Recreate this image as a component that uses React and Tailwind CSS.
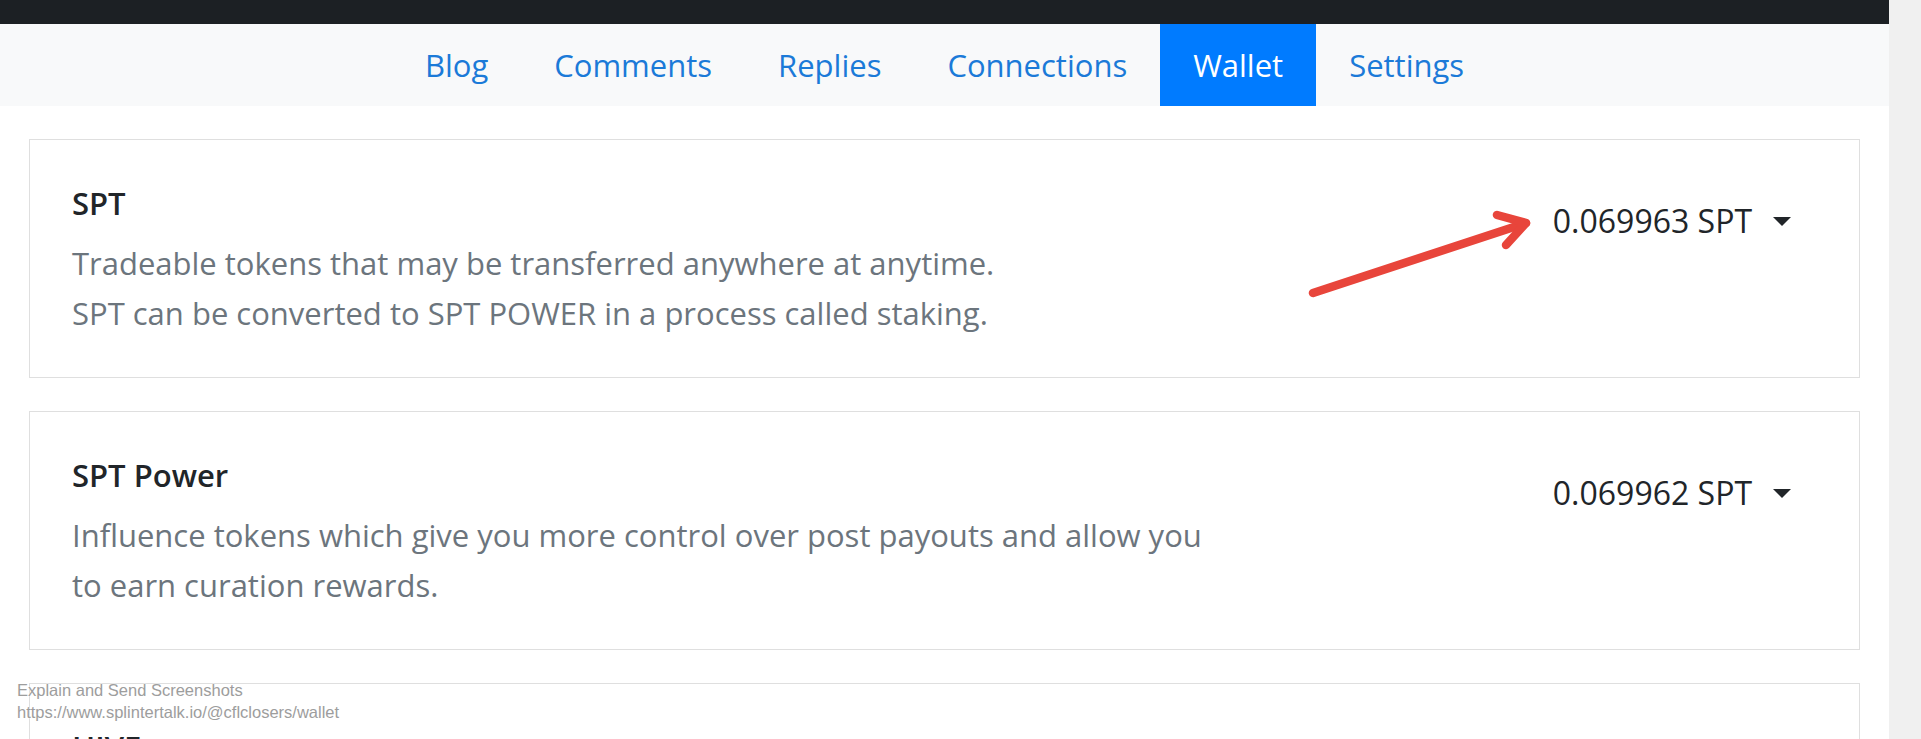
import React from 'react'

const tabs = ['Blog', 'Comments', 'Replies', 'Connections', 'Wallet', 'Settings']

const cards = [
  {
    title: 'SPT',
    lines: [
      'Tradeable tokens that may be transferred anywhere at anytime.',
      'SPT can be converted to SPT POWER in a process called staking.',
    ],
    amount: '0.069963 SPT',
  },
  {
    title: 'SPT Power',
    lines: ['Influence tokens which give you more control over post payouts and allow you to earn curation rewards.'],
    amount: '0.069962 SPT',
  },
  {
    title: 'HIVE',
    lines: ['Tradeable tokens that may be transferred anywhere at anytime.'],
    amount: '0.000 HIVE',
  },
]

const WalletCard = ({ card }) => {
  return (
    <div className="flex h-[239px] shrink-0 border border-[#dfdfdf] bg-white">
      {/* left: name + description */}
      <div className="w-[1190px] pl-[42px] pt-[45px]">
        <h5 className="text-[31px] leading-[36px] font-semibold text-[#212529]">{card.title}</h5>
        <div className="mt-[17px] text-[31px] leading-[50px] text-[#6c757d]">
          {card.lines.map((l) => (
            <p key={l}>{l}</p>
          ))}
        </div>
      </div>

      {/* right: balance dropdown */}
      <div className="flex flex-1 justify-end pr-[68px] pt-[63px]">
        <button className="flex h-[36px] items-center gap-[21px] text-[32px] leading-[36px] text-[#212529]">
          <span>{card.amount}</span>
          <span className="h-0 w-0 border-x-[9px] border-t-[9px] border-x-transparent border-t-[#212529]" />
        </button>
      </div>
    </div>
  )
}

const App = () => {
  return (
    <div className="relative flex h-[739px] overflow-hidden bg-white font-['Open_Sans',sans-serif]">
      <div className="flex min-w-0 flex-1 flex-col">
        {/* top dark bar */}
        <div className="h-[24px] shrink-0 bg-[#1c2024]" />

        {/* profile tabs */}
        <nav className="flex h-[82px] shrink-0 justify-center bg-[#f8f9fa]">
          {tabs.map((t) => (
            <a
              key={t}
              href="#"
              className={
                t === 'Wallet'
                  ? 'flex items-center bg-[#007bff] px-[33px] text-[31px] text-white'
                  : 'flex items-center px-[33px] text-[31px] text-[#1b7ad8]'
              }
            >
              {t}
            </a>
          ))}
        </nav>

        {/* wallet rows */}
        <div className="flex flex-col gap-[33px] px-[29px] pt-[33px]">
          {cards.map((c) => (
            <WalletCard key={c.title} card={c} />
          ))}
        </div>
      </div>

      {/* scrollbar track */}
      <div className="w-[32px] shrink-0 bg-[#f0f0f0]" />

      {/* red annotation arrow */}
      <svg className="absolute left-[1300px] top-[200px]" width="240" height="110" viewBox="0 0 240 110">
        <g fill="none" stroke="#e8453b" strokeWidth="8.5" strokeLinecap="round" strokeLinejoin="round">
          <path d="M13 93 L226 23" />
          <path d="M197 15 L226 23 L206 45" />
        </g>
      </svg>

      {/* screenshot tool watermark */}
      <div className="absolute left-[17px] top-[679px] font-['Liberation_Sans',sans-serif] text-[16.5px] leading-[22px] text-[#9d9d9d] [text-shadow:0_0_2px_#fff,0_0_1px_#fff]">
        <div>Explain and Send Screenshots</div>
        <div>https://www.splintertalk.io/@cflclosers/wallet</div>
      </div>
    </div>
  )
}

export default App
